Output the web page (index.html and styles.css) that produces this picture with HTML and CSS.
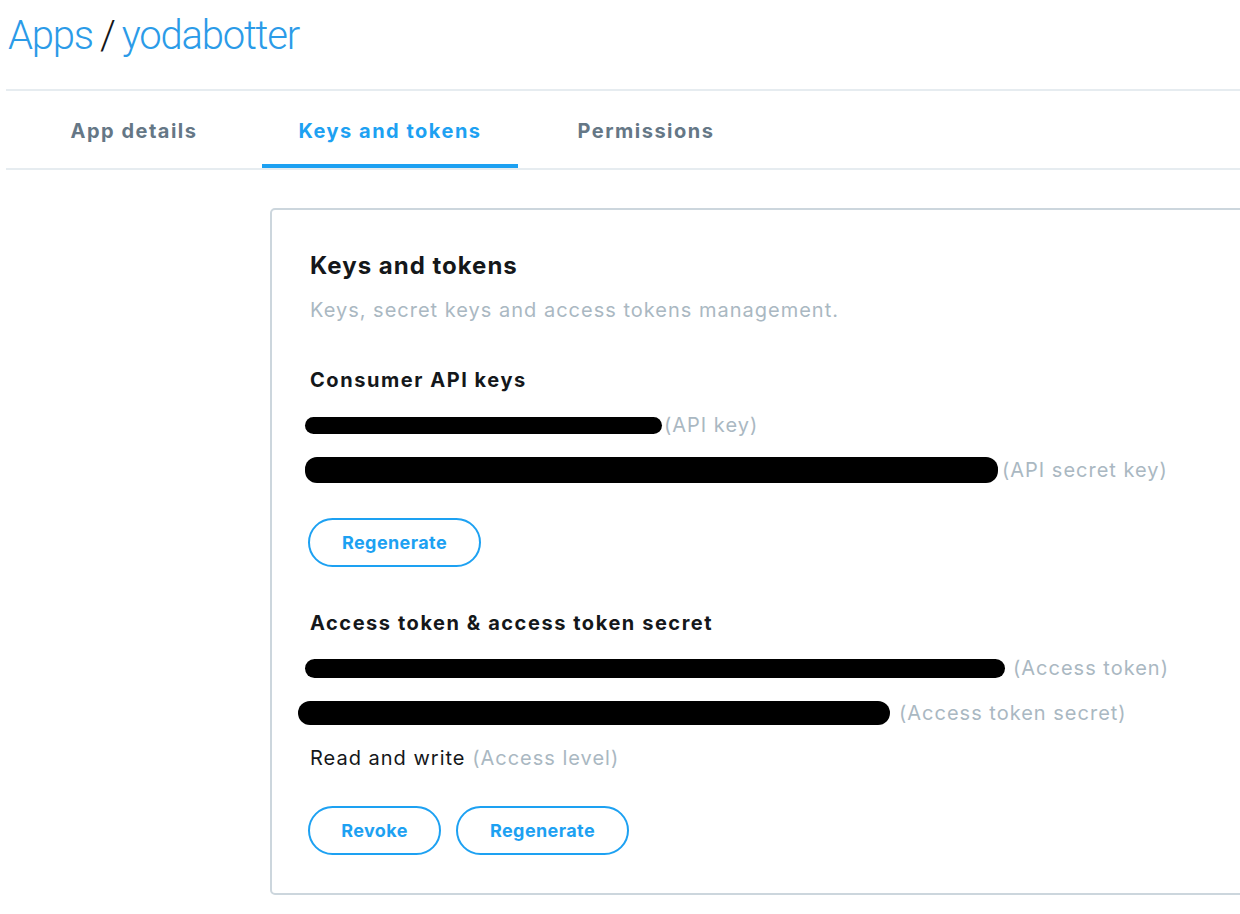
FILE: index.html
```html
<!DOCTYPE html>
<html>
<head>
<meta charset="utf-8">
<link rel="stylesheet" href="styles.css">
</head>
<body>
<div class="page">
  <h1 class="title"><span class="crumb">Apps</span> <span class="sep">/</span> <span class="crumb">yodabotter</span></h1>
  <nav class="tabs">
    <a class="tab">App details</a>
    <a class="tab active">Keys and tokens</a>
    <a class="tab">Permissions</a>
  </nav>
  <section class="card">
    <h2 class="card-title">Keys and tokens</h2>
    <p class="card-sub">Keys, secret keys and access tokens management.</p>

    <h3 class="group-title">Consumer API keys</h3>
    <div class="row"><span class="redact r1"></span><span class="muted">(API key)</span></div>
    <div class="row"><span class="redact r2"></span><span class="muted">(API secret key)</span></div>
    <div class="actions"><button class="btn btn-wide">Regenerate</button></div>

    <h3 class="group-title second">Access token &amp; access token secret</h3>
    <div class="row"><span class="redact r3"></span><span class="muted">(Access token)</span></div>
    <div class="row"><span class="redact r4"></span><span class="muted">(Access token secret)</span></div>
    <div class="row"><span>Read and write&nbsp;</span><span class="muted">(Access level)</span></div>
    <div class="actions"><button class="btn btn-narrow">Revoke</button><button class="btn btn-wide">Regenerate</button></div>
  </section>
</div>
</body>
</html>
```
FILE: styles.css
```css
html, body {
  margin: 0;
  padding: 0;
  overflow: hidden;
  background: #fff;
}
body {
  font-family: Inter, "Noto Sans", sans-serif;
  color: #14171a;
}
.page {
  padding-left: 6px;
}
.title {
  margin: 0;
  height: 91px;
  box-sizing: border-box;
  padding: 12px 0 0 2px;
  font-family: Roboto, Lato, sans-serif;
  font-weight: 300;
  font-size: 40px;
  line-height: 48px;
  letter-spacing: -1.2px;
  word-spacing: -1.5px;
  color: #2b9be8;
  border-bottom: 2px solid #e6ecf0;
}
.sep {
  color: #14171a;
}
.tabs {
  display: flex;
  border-bottom: 2px solid #e6ecf0;
  margin-top: 2px;
}
.tab {
  width: 256px;
  height: 75px;
  box-sizing: border-box;
  display: flex;
  align-items: center;
  justify-content: center;
  padding-top: 4px;
  font-weight: 700;
  font-size: 20px;
  letter-spacing: 1.5px;
  color: #657786;
  border-bottom: 4px solid transparent;
}
.tab.active {
  color: #1da1f2;
  border-bottom-color: #1da1f2;
}
.card {
  margin: 38px 0 0 264px;
  width: 1100px;
  border: 2px solid #ccd6dd;
  border-radius: 5px;
  padding: 42px 38px 38px;
  box-sizing: border-box;
}
.card-title {
  margin: 0;
  font-size: 24px;
  line-height: 28px;
  font-weight: 700;
  letter-spacing: 1px;
}
.card-sub {
  margin: 18px 0 0;
  font-size: 20px;
  line-height: 24px;
  letter-spacing: 1px;
  color: #aab8c2;
}
.group-title {
  margin: 46px 0 0;
  font-size: 20px;
  line-height: 24px;
  font-weight: 700;
  letter-spacing: 1.55px;
}
.group-title.second {
  margin-top: 44px;
}
.row {
  margin-top: 21px;
  font-size: 20px;
  line-height: 24px;
  height: 24px;
  display: flex;
  align-items: center;
  white-space: nowrap;
  letter-spacing: 1px;
}
.muted {
  color: #aab8c2;
}
.redact {
  display: inline-block;
  flex: none;
  background: #000;
  border-radius: 12px;
}
.r1 { width: 357px; height: 17px; margin-left: -5px; margin-right: 2px; }
.r2 { width: 693px; height: 26px; margin-left: -5px; margin-right: 4px; }
.r3 { width: 700px; height: 19px; margin-left: -5px; margin-right: 8px; }
.r4 { width: 592px; height: 24px; margin-left: -12px; margin-right: 9px; }
.actions {
  display: flex;
  gap: 15px;
  margin-top: 36px;
  margin-left: -2px;
}
.btn {
  height: 49px;
  border: 2px solid #1da1f2;
  border-radius: 25px;
  background: #fff;
  color: #1da1f2;
  font-family: Inter, "Noto Sans", sans-serif;
  font-weight: 700;
  font-size: 18px;
  letter-spacing: 0.4px;
  padding: 0;
}
.btn-wide { width: 173px; }
.btn-narrow { width: 133px; }
```
